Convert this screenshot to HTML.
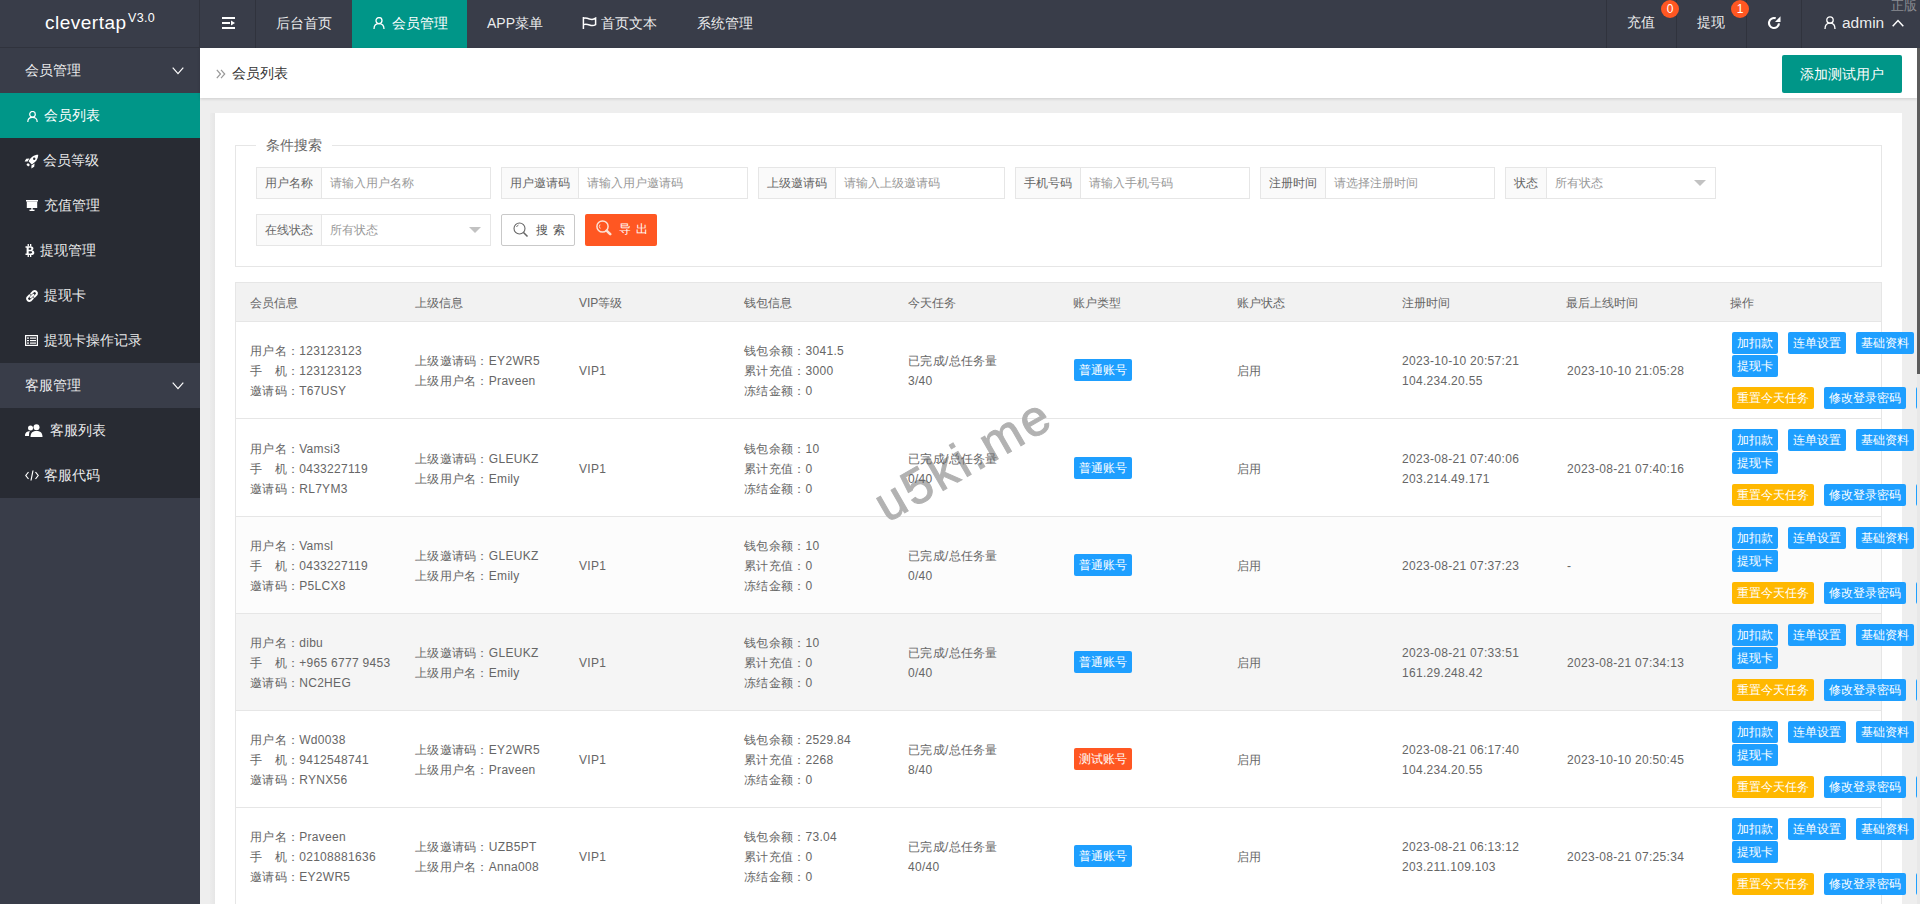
<!DOCTYPE html>
<html><head><meta charset="utf-8"><title>clevertap</title>
<style>
*{margin:0;padding:0;box-sizing:border-box}
html,body{width:1920px;height:904px;overflow:hidden}
body{position:relative;background:#eeeeee;font-family:"Liberation Sans",sans-serif;font-size:14px;color:#666}
.abs{position:absolute}
.hdr{position:absolute;left:0;top:0;width:1920px;height:48px;background:#393D49}
.logo{position:absolute;left:0;top:0;width:200px;height:48px;border-bottom:1px solid #30333d}
.logo .t{position:absolute;left:45px;top:11px;font-size:19px;letter-spacing:0.5px;color:#fff;line-height:24px}
.logo .v{position:absolute;left:128px;top:11px;font-size:12.5px;letter-spacing:0.3px;color:#fff;line-height:14px}
.nav{position:absolute;top:0;height:48px;line-height:46px;color:rgba(255,255,255,.92);font-size:14px;white-space:nowrap}
.sep{position:absolute;top:0;width:1px;height:48px;background:#30333d}
.badge{position:absolute;top:0;z-index:2;width:18px;height:18px;border-radius:9px;background:#FF5722;color:#fff;font-size:12px;line-height:18px;text-align:center}
.side{position:absolute;left:0;top:48px;width:200px;height:856px;background:#393D49}
.grp{position:absolute;left:0;width:200px;height:45px;line-height:45px;color:rgba(255,255,255,.92);padding-left:25px;font-size:14px;background:#393D49}
.itm{position:absolute;left:0;width:200px;height:45px;line-height:45px;color:rgba(255,255,255,.92);font-size:14px;background:#282B33}
.itm.on{background:#009688;color:#fff}
.itm .ic{position:absolute;top:0;height:45px}
.itm .tx{position:absolute;top:0}
.bc{position:absolute;left:200px;top:48px;width:1717px;height:50px;background:#fff;box-shadow:0 1px 3px rgba(0,0,0,.14)}
.card{position:absolute;left:215px;top:113px;width:1687px;height:800px;background:#fff}
.fs{position:absolute;left:235px;top:145px;width:1647px;height:122px;border:1px solid #e6e6e6}
.lg{position:absolute;left:256px;top:136px;padding:0 10px;background:#fff;font-size:14px;line-height:18px;color:#666}
.ig{position:absolute;height:32px;border:1px solid #e6e6e6;background:#fff;font-size:12px;line-height:30px;white-space:nowrap}
.ig .lb{position:absolute;left:0;top:0;height:30px;padding:0 0 0 8px;overflow:hidden;background:#FAFAFA;border-right:1px solid #e6e6e6;color:#666}
.ig .ph{position:absolute;top:0;color:#999}
.tri{position:absolute;top:12px;width:0;height:0;border-left:6px solid transparent;border-right:6px solid transparent;border-top:6px solid #c2c2c2}
.tbl{position:absolute;left:235px;top:282px;width:1647px;height:640px;border-left:1px solid #e6e6e6;border-right:1px solid #e6e6e6}
.th{position:absolute;left:235px;top:282px;width:1647px;height:40px;background:#f2f2f2;border:1px solid #e6e6e6;border-bottom-color:#e6e6e6}
.th>span{position:absolute;top:1px;line-height:38px;font-size:12px;color:#666}
.row{position:absolute;left:236px;width:1645px;border-bottom:1px solid #e6e6e6;background:#fff}
.c{position:absolute;z-index:6;font-size:12px;line-height:20px;color:#666;white-space:nowrap;margin-top:1px;letter-spacing:0.3px}
.btn{position:absolute;height:22px;line-height:22px;padding:0;text-align:center;font-size:12px;color:#fff;background:#1E9FFF;border-radius:2px;white-space:nowrap}
.btn.w{background:#FFB800}
.btn.d{background:#FF5722}
.sb{position:absolute;left:1917px;top:48px;width:3px;height:856px;background:#e8e8e8}
.sbt{position:absolute;left:1917px;top:48px;width:3px;height:326px;background:#5c5c5c}
.wm{position:absolute;left:891px;top:480px;font-size:50px;font-weight:normal;-webkit-text-stroke:1px rgb(178,178,178);color:rgb(178,178,178);transform:rotate(-30deg);transform-origin:left bottom;line-height:50px;letter-spacing:3px;z-index:5}
</style></head>
<body>
<!-- HEADER -->
<div class="hdr">
  <div class="logo"><span class="t">clevertap</span><span class="v">V3.0</span></div>
  <svg class="abs" style="left:222px;top:17px" width="13" height="12" viewBox="0 0 13 12"><rect x="0" y="0" width="13" height="2" fill="#fff"/><rect x="0" y="5" width="8" height="2" fill="#fff"/><rect x="0" y="10" width="13" height="2" fill="#fff"/><path d="M9 3.5 L13 6 L9 8.5Z" fill="#fff"/></svg>
  <div class="sep" style="left:199px"></div><div class="sep" style="left:255px"></div>
  <div class="nav" style="left:276px">后台首页</div>
  <div class="abs" style="left:352px;top:0;width:115px;height:48px;background:#009688"></div>
  <svg class="abs" style="left:373px;top:17px" width="12" height="12" viewBox="0 0 12 12"><circle cx="6" cy="3.6" r="3" fill="none" stroke="#fff" stroke-width="1.3"/><path d="M1 12 C1 8 3 6.6 6 6.6 C9 6.6 11 8 11 12" fill="none" stroke="#fff" stroke-width="1.3"/></svg>
  <div class="nav" style="left:392px;color:#fff">会员管理</div>
  <div class="nav" style="left:487px">APP菜单</div>
  <svg class="abs" style="left:582px;top:17px" width="15" height="12" viewBox="0 0 15 12"><path d="M1.4 0 V12" stroke="#fff" stroke-width="1.5"/><path d="M1.4 1.2 Q4 0.6 7.5 2 Q11 3.2 13.6 1.2 V7.6 Q11 9.4 7.5 8 Q4 6.6 1.4 7.6" fill="none" stroke="#fff" stroke-width="1.5"/></svg>
  <div class="nav" style="left:601px">首页文本</div>
  <div class="nav" style="left:697px">系统管理</div>

  <div class="sep" style="left:1606px"></div>
  <div class="nav" style="left:1627px;line-height:44px">充值</div>
  <div class="badge" style="left:1661px">0</div>
  <div class="sep" style="left:1676px"></div>
  <div class="nav" style="left:1697px;line-height:44px">提现</div>
  <div class="badge" style="left:1731px">1</div>
  <div class="sep" style="left:1746px"></div>
  <svg class="abs" style="left:1767px;top:16px" width="15" height="14" viewBox="0 0 15 14"><path d="M8.7 2.3 A5 5 0 1 0 11.98 7.44" fill="none" stroke="#fff" stroke-width="2.1"/><path d="M8 6 L13.5 0.3 L13.5 6Z" fill="#fff"/></svg>
  <div class="sep" style="left:1801px"></div>
  <svg class="abs" style="left:1824px;top:16px" width="12" height="13" viewBox="0 0 12 13"><circle cx="6" cy="4" r="3.2" fill="none" stroke="#fff" stroke-width="1.3"/><path d="M1 13 C1 8.8 3 7.2 6 7.2 C9 7.2 11 8.8 11 13" fill="none" stroke="#fff" stroke-width="1.3"/></svg>
  <div class="nav" style="left:1842px;font-size:15.5px;line-height:45px">admin</div>
  <svg class="abs" style="left:1892px;top:19px" width="12" height="8" viewBox="0 0 12 8"><path d="M0.7 7.3 L6 1.5 L11.3 7.3" fill="none" stroke="#fff" stroke-width="1.5"/></svg>
  <div class="abs" style="left:1891px;top:-2px;font-size:13px;line-height:15px;color:#8a8c92">正版</div>
</div>

<!-- SIDEBAR -->
<div class="side">
  <div class="grp" style="top:0">会员管理<svg class="abs" style="left:172px;top:19px" width="12" height="8" viewBox="0 0 12 8"><path d="M0.7 0.7 L6 6.6 L11.3 0.7" fill="none" stroke="#fff" stroke-width="1.2"/></svg></div>
  <div class="itm on" style="top:45px"><svg class="abs" style="left:27px;top:18px" width="11" height="11" viewBox="0 0 11 11"><circle cx="5.5" cy="3.3" r="2.8" fill="none" stroke="#fff" stroke-width="1.2"/><path d="M0.8 11 C0.8 7.6 2.8 6.3 5.5 6.3 C8.2 6.3 10.2 7.6 10.2 11" fill="none" stroke="#fff" stroke-width="1.2"/></svg><span class="tx" style="left:44px">会员列表</span></div>
  <div class="itm" style="top:90px"><svg class="abs" style="left:24px;top:16px" width="15" height="15" viewBox="0 0 15 15"><path d="M14.2 0.8 C10 0.8 6.6 3.4 4.6 7.2 L7.8 10.4 C11.6 8.4 14.2 5 14.2 0.8Z" fill="#fff"/><path d="M5.4 4.4 L2.2 4.8 L0.6 7.6 L3.6 7.6Z M10.6 9.6 L10.2 12.8 L7.4 14.4 L7.4 11.4Z" fill="#fff"/><path d="M4 9 L6 11 L4.2 12.6 L2.4 10.8Z" fill="#fff"/><circle cx="10.2" cy="4.8" r="1.2" fill="#282B33"/></svg><span class="tx" style="left:43px">会员等级</span></div>
  <div class="itm" style="top:135px"><svg class="abs" style="left:26px;top:17px" width="12" height="11" viewBox="0 0 12 11"><rect x="0" y="0" width="12" height="1.5" fill="#fff"/><rect x="0.8" y="1.5" width="10.4" height="6.5" fill="#fff"/><rect x="5.3" y="8" width="1.4" height="2" fill="#fff"/><rect x="3.5" y="9.6" width="5" height="1.4" fill="#fff"/></svg><span class="tx" style="left:44px">充值管理</span></div>
  <div class="itm" style="top:180px"><svg class="abs" style="left:25px;top:16px" width="10" height="13" viewBox="0 0 10 13"><path d="M0.5 2.2 H5.6 C7.6 2.2 8.4 3.2 8.4 4.4 C8.4 5.4 7.8 6 7 6.3 C8.3 6.6 9.3 7.4 9.3 8.7 C9.3 10.1 8.2 11 6.2 11 H0.5 V9.5 H1.6 V3.7 H0.5Z M3.7 3.8 V5.7 H5.2 C5.9 5.7 6.3 5.3 6.3 4.75 C6.3 4.2 5.9 3.8 5.2 3.8Z M3.7 7.2 V9.4 H5.6 C6.6 9.4 7.1 9 7.1 8.3 C7.1 7.6 6.6 7.2 5.6 7.2Z" fill="#fff" fill-rule="evenodd"/><rect x="2.6" y="0" width="1.3" height="2.5" fill="#fff"/><rect x="5" y="0" width="1.3" height="2.5" fill="#fff"/><rect x="2.6" y="10.6" width="1.3" height="2.4" fill="#fff"/><rect x="5" y="10.6" width="1.3" height="2.4" fill="#fff"/></svg><span class="tx" style="left:40px">提现管理</span></div>
  <div class="itm" style="top:225px"><svg class="abs" style="left:25px;top:16px" width="14" height="14" viewBox="0 0 14 14"><path d="M5.6 8.4 L8.4 5.6" stroke="#fff" stroke-width="1.8" stroke-linecap="round"/><path d="M4.6 6.2 L2.3 8.5 A2.4 2.4 0 0 0 5.5 11.7 L7.8 9.4" fill="none" stroke="#fff" stroke-width="2" stroke-linecap="round"/><path d="M9.4 7.8 L11.7 5.5 A2.4 2.4 0 0 0 8.5 2.3 L6.2 4.6" fill="none" stroke="#fff" stroke-width="2" stroke-linecap="round"/></svg><span class="tx" style="left:44px">提现卡</span></div>
  <div class="itm" style="top:270px"><svg class="abs" style="left:25px;top:17px" width="13" height="11" viewBox="0 0 13 11"><rect x="0.6" y="0.6" width="11.8" height="9.8" fill="none" stroke="#fff" stroke-width="1.2"/><rect x="2" y="2.5" width="2" height="1.2" fill="#fff"/><rect x="5" y="2.5" width="6" height="1.2" fill="#fff"/><rect x="2" y="5" width="2" height="1.2" fill="#fff"/><rect x="5" y="5" width="6" height="1.2" fill="#fff"/><rect x="2" y="7.5" width="2" height="1.2" fill="#fff"/><rect x="5" y="7.5" width="6" height="1.2" fill="#fff"/></svg><span class="tx" style="left:44px">提现卡操作记录</span></div>
  <div class="grp" style="top:315px">客服管理<svg class="abs" style="left:172px;top:19px" width="12" height="8" viewBox="0 0 12 8"><path d="M0.7 0.7 L6 6.6 L11.3 0.7" fill="none" stroke="#fff" stroke-width="1.2"/></svg></div>
  <div class="itm" style="top:360px"><svg class="abs" style="left:25px;top:16px" width="18" height="13" viewBox="0 0 18 13"><circle cx="11.5" cy="3.3" r="3" fill="#fff"/><path d="M5.5 13 C5.5 8.5 8 7 11.5 7 C15 7 17.5 8.5 17.5 13Z" fill="#fff"/><circle cx="5.5" cy="4" r="2.5" fill="#fff"/><path d="M0 12 C0 8.5 2 7.3 5 7.3 C4 8.5 4 10 4 12Z" fill="#fff"/></svg><span class="tx" style="left:50px">客服列表</span></div>
  <div class="itm" style="top:405px"><svg class="abs" style="left:25px;top:17px" width="14" height="11" viewBox="0 0 14 11"><path d="M3.5 2 L0.8 5.5 L3.5 9 M10.5 2 L13.2 5.5 L10.5 9 M8 0.5 L6 10.5" fill="none" stroke="#fff" stroke-width="1.2"/></svg><span class="tx" style="left:44px">客服代码</span></div>
</div>

<!-- BREADCRUMB -->
<div class="bc">
  <svg class="abs" style="left:16px;top:21px" width="10" height="10" viewBox="0 0 10 10"><path d="M0.8 0.8 L4.5 5 L0.8 9.2 M5 0.8 L8.7 5 L5 9.2" fill="none" stroke="#999" stroke-width="1.2"/></svg>
  <div class="abs" style="left:32px;top:0;line-height:50px;color:#333;font-size:14px">会员列表</div>
  <div class="abs" style="left:1582px;top:7px;width:120px;height:38px;line-height:38px;background:#009688;color:#fff;text-align:center;border-radius:2px;font-size:14px">添加测试用户</div>
</div>

<!-- CARD -->
<div class="abs" style="left:210px;top:113px;width:5px;height:800px;background:linear-gradient(to right,#ececec,#e6e6e6)"></div><div class="card"></div>
<div class="fs"></div>
<div class="lg">条件搜索</div>

<div class="ig" style="left:256px;top:167px;width:235px"><span class="lb" style="width:65px">用户名称</span><span class="ph" style="left:73px">请输入用户名称</span></div>
<div class="ig" style="left:501px;top:167px;width:247px"><span class="lb" style="width:77px">用户邀请码</span><span class="ph" style="left:85px">请输入用户邀请码</span></div>
<div class="ig" style="left:758px;top:167px;width:247px"><span class="lb" style="width:77px">上级邀请码</span><span class="ph" style="left:85px">请输入上级邀请码</span></div>
<div class="ig" style="left:1015px;top:167px;width:235px"><span class="lb" style="width:65px">手机号码</span><span class="ph" style="left:73px">请输入手机号码</span></div>
<div class="ig" style="left:1260px;top:167px;width:235px"><span class="lb" style="width:65px">注册时间</span><span class="ph" style="left:73px">请选择注册时间</span></div>
<div class="ig" style="left:1505px;top:167px;width:211px"><span class="lb" style="width:41px">状态</span><span class="ph" style="left:49px">所有状态</span><span class="tri" style="left:188px"></span></div>
<div class="ig" style="left:256px;top:214px;width:235px"><span class="lb" style="width:65px">在线状态</span><span class="ph" style="left:73px">所有状态</span><span class="tri" style="left:212px"></span></div>

<div class="abs" style="left:501px;top:214px;width:74px;height:32px;border:1px solid #C9C9C9;background:#fff;border-radius:2px;font-size:12px;line-height:30px;color:#555">
  <svg class="abs" style="left:11px;top:7px" width="16" height="16" viewBox="0 0 16 16"><circle cx="6.5" cy="6.5" r="5.5" fill="none" stroke="#666" stroke-width="1.1"/><path d="M10.5 10.5 L14.5 14.5" stroke="#666" stroke-width="1.6"/><path d="M3.5 5 A3.5 3.5 0 0 1 5.5 3" fill="none" stroke="#666" stroke-width="0.9"/></svg>
  <span class="abs" style="left:34px;top:0">搜</span><span class="abs" style="left:51px;top:0">索</span>
</div>
<div class="abs" style="left:585px;top:214px;width:72px;height:32px;background:#FF5722;border-radius:2px;font-size:12px;line-height:30px;color:#fff">
  <svg class="abs" style="left:11px;top:6px" width="16" height="16" viewBox="0 0 16 16"><circle cx="6.5" cy="6.5" r="5.6" fill="none" stroke="#fde0d2" stroke-width="1.5"/><path d="M4 4.5 A3.2 3.2 0 0 0 4.3 8.6" fill="none" stroke="#fde0d2" stroke-width="1"/><path d="M10.6 10.6 L14.2 14.2" stroke="#fde0d2" stroke-width="2.6" stroke-linecap="round"/></svg>
  <span class="abs" style="left:34px;top:0">导</span><span class="abs" style="left:51px;top:0">出</span>
</div>

<!-- TABLE -->
<div class="tbl"></div>
<div class="th">
  <span style="left:14px">会员信息</span><span style="left:179px">上级信息</span><span style="left:343px">VIP等级</span><span style="left:508px">钱包信息</span><span style="left:672px">今天任务</span><span style="left:837px">账户类型</span><span style="left:1001px">账户状态</span><span style="left:1166px">注册时间</span><span style="left:1330px">最后上线时间</span><span style="left:1494px">操作</span>
</div>
<div id="rows"><div class="row" style="top:322px;height:97px;background:#fff"></div>
<div class="c" style="left:250px;top:340.0px">用户名：123123123<br>手　机：123123123<br>邀请码：T67USY</div>
<div class="c" style="left:415px;top:350.0px">上级邀请码：EY2WR5<br>上级用户名：Praveen</div>
<div class="c" style="left:579px;top:360.0px">VIP1</div>
<div class="c" style="left:744px;top:340.0px">钱包余额：3041.5<br>累计充值：3000<br>冻结金额：0</div>
<div class="c" style="left:908px;top:350.0px">已完成/总任务量<br>3/40</div>
<div class="btn" style="left:1074px;top:359.0px;width:58px">普通账号</div>
<div class="c" style="left:1237px;top:360.0px">启用</div>
<div class="c" style="left:1402px;top:350.0px">2023-10-10 20:57:21<br>104.234.20.55</div>
<div class="c" style="left:1567px;top:360.0px">2023-10-10 21:05:28</div>
<div class="btn" style="left:1732px;top:332px;width:46px">加扣款</div>
<div class="btn" style="left:1788px;top:332px;width:58px">连单设置</div>
<div class="btn" style="left:1856px;top:332px;width:58px">基础资料</div>
<div class="btn" style="left:1732px;top:355px;width:46px">提现卡</div>
<div class="btn w" style="left:1732px;top:387px;width:82px">重置今天任务</div>
<div class="btn" style="left:1824px;top:387px;width:82px">修改登录密码</div>
<div class="btn" style="left:1916px;top:387px;width:34px">删除</div>
<div class="row" style="top:419px;height:98px;background:#fff"></div>
<div class="c" style="left:250px;top:437.5px">用户名：Vamsi3<br>手　机：0433227119<br>邀请码：RL7YM3</div>
<div class="c" style="left:415px;top:447.5px">上级邀请码：GLEUKZ<br>上级用户名：Emily</div>
<div class="c" style="left:579px;top:457.5px">VIP1</div>
<div class="c" style="left:744px;top:437.5px">钱包余额：10<br>累计充值：0<br>冻结金额：0</div>
<div class="c" style="left:908px;top:447.5px">已完成/总任务量<br>0/40</div>
<div class="btn" style="left:1074px;top:456.5px;width:58px">普通账号</div>
<div class="c" style="left:1237px;top:457.5px">启用</div>
<div class="c" style="left:1402px;top:447.5px">2023-08-21 07:40:06<br>203.214.49.171</div>
<div class="c" style="left:1567px;top:457.5px">2023-08-21 07:40:16</div>
<div class="btn" style="left:1732px;top:429px;width:46px">加扣款</div>
<div class="btn" style="left:1788px;top:429px;width:58px">连单设置</div>
<div class="btn" style="left:1856px;top:429px;width:58px">基础资料</div>
<div class="btn" style="left:1732px;top:452px;width:46px">提现卡</div>
<div class="btn w" style="left:1732px;top:484px;width:82px">重置今天任务</div>
<div class="btn" style="left:1824px;top:484px;width:82px">修改登录密码</div>
<div class="btn" style="left:1916px;top:484px;width:34px">删除</div>
<div class="row" style="top:517px;height:97px;background:#fcfcfc"></div>
<div class="c" style="left:250px;top:535.0px">用户名：Vamsl<br>手　机：0433227119<br>邀请码：P5LCX8</div>
<div class="c" style="left:415px;top:545.0px">上级邀请码：GLEUKZ<br>上级用户名：Emily</div>
<div class="c" style="left:579px;top:555.0px">VIP1</div>
<div class="c" style="left:744px;top:535.0px">钱包余额：10<br>累计充值：0<br>冻结金额：0</div>
<div class="c" style="left:908px;top:545.0px">已完成/总任务量<br>0/40</div>
<div class="btn" style="left:1074px;top:554.0px;width:58px">普通账号</div>
<div class="c" style="left:1237px;top:555.0px">启用</div>
<div class="c" style="left:1402px;top:555.0px">2023-08-21 07:37:23</div>
<div class="c" style="left:1567px;top:555.0px">-</div>
<div class="btn" style="left:1732px;top:527px;width:46px">加扣款</div>
<div class="btn" style="left:1788px;top:527px;width:58px">连单设置</div>
<div class="btn" style="left:1856px;top:527px;width:58px">基础资料</div>
<div class="btn" style="left:1732px;top:550px;width:46px">提现卡</div>
<div class="btn w" style="left:1732px;top:582px;width:82px">重置今天任务</div>
<div class="btn" style="left:1824px;top:582px;width:82px">修改登录密码</div>
<div class="btn" style="left:1916px;top:582px;width:34px">删除</div>
<div class="row" style="top:614px;height:97px;background:#f5f5f5"></div>
<div class="c" style="left:250px;top:632.0px">用户名：dibu<br>手　机：+965 6777 9453<br>邀请码：NC2HEG</div>
<div class="c" style="left:415px;top:642.0px">上级邀请码：GLEUKZ<br>上级用户名：Emily</div>
<div class="c" style="left:579px;top:652.0px">VIP1</div>
<div class="c" style="left:744px;top:632.0px">钱包余额：10<br>累计充值：0<br>冻结金额：0</div>
<div class="c" style="left:908px;top:642.0px">已完成/总任务量<br>0/40</div>
<div class="btn" style="left:1074px;top:651.0px;width:58px">普通账号</div>
<div class="c" style="left:1237px;top:652.0px">启用</div>
<div class="c" style="left:1402px;top:642.0px">2023-08-21 07:33:51<br>161.29.248.42</div>
<div class="c" style="left:1567px;top:652.0px">2023-08-21 07:34:13</div>
<div class="btn" style="left:1732px;top:624px;width:46px">加扣款</div>
<div class="btn" style="left:1788px;top:624px;width:58px">连单设置</div>
<div class="btn" style="left:1856px;top:624px;width:58px">基础资料</div>
<div class="btn" style="left:1732px;top:647px;width:46px">提现卡</div>
<div class="btn w" style="left:1732px;top:679px;width:82px">重置今天任务</div>
<div class="btn" style="left:1824px;top:679px;width:82px">修改登录密码</div>
<div class="btn" style="left:1916px;top:679px;width:34px">删除</div>
<div class="row" style="top:711px;height:97px;background:#fff"></div>
<div class="c" style="left:250px;top:729.0px">用户名：Wd0038<br>手　机：9412548741<br>邀请码：RYNX56</div>
<div class="c" style="left:415px;top:739.0px">上级邀请码：EY2WR5<br>上级用户名：Praveen</div>
<div class="c" style="left:579px;top:749.0px">VIP1</div>
<div class="c" style="left:744px;top:729.0px">钱包余额：2529.84<br>累计充值：2268<br>冻结金额：0</div>
<div class="c" style="left:908px;top:739.0px">已完成/总任务量<br>8/40</div>
<div class="btn d" style="left:1074px;top:748.0px;width:58px">测试账号</div>
<div class="c" style="left:1237px;top:749.0px">启用</div>
<div class="c" style="left:1402px;top:739.0px">2023-08-21 06:17:40<br>104.234.20.55</div>
<div class="c" style="left:1567px;top:749.0px">2023-10-10 20:50:45</div>
<div class="btn" style="left:1732px;top:721px;width:46px">加扣款</div>
<div class="btn" style="left:1788px;top:721px;width:58px">连单设置</div>
<div class="btn" style="left:1856px;top:721px;width:58px">基础资料</div>
<div class="btn" style="left:1732px;top:744px;width:46px">提现卡</div>
<div class="btn w" style="left:1732px;top:776px;width:82px">重置今天任务</div>
<div class="btn" style="left:1824px;top:776px;width:82px">修改登录密码</div>
<div class="btn" style="left:1916px;top:776px;width:34px">删除</div>
<div class="row" style="top:808px;height:97px;background:#fff"></div>
<div class="c" style="left:250px;top:826.0px">用户名：Praveen<br>手　机：02108881636<br>邀请码：EY2WR5</div>
<div class="c" style="left:415px;top:836.0px">上级邀请码：UZB5PT<br>上级用户名：Anna008</div>
<div class="c" style="left:579px;top:846.0px">VIP1</div>
<div class="c" style="left:744px;top:826.0px">钱包余额：73.04<br>累计充值：0<br>冻结金额：0</div>
<div class="c" style="left:908px;top:836.0px">已完成/总任务量<br>40/40</div>
<div class="btn" style="left:1074px;top:845.0px;width:58px">普通账号</div>
<div class="c" style="left:1237px;top:846.0px">启用</div>
<div class="c" style="left:1402px;top:836.0px">2023-08-21 06:13:12<br>203.211.109.103</div>
<div class="c" style="left:1567px;top:846.0px">2023-08-21 07:25:34</div>
<div class="btn" style="left:1732px;top:818px;width:46px">加扣款</div>
<div class="btn" style="left:1788px;top:818px;width:58px">连单设置</div>
<div class="btn" style="left:1856px;top:818px;width:58px">基础资料</div>
<div class="btn" style="left:1732px;top:841px;width:46px">提现卡</div>
<div class="btn w" style="left:1732px;top:873px;width:82px">重置今天任务</div>
<div class="btn" style="left:1824px;top:873px;width:82px">修改登录密码</div>
<div class="btn" style="left:1916px;top:873px;width:34px">删除</div></div><!--/rows-->

<div class="sb"></div><div class="sbt"></div>
<div class="wm">u5ki.me</div>
<script>
(function(){
  var p=document.createElement('span');
  p.style.cssText='position:absolute;left:0;top:0;visibility:hidden;font-size:100px;line-height:100px;white-space:nowrap;letter-spacing:0';
  p.textContent='\u4f1a\u5458\u7ba1\u7406';
  document.body.appendChild(p);
  var w=p.getBoundingClientRect().width;
  document.body.removeChild(p);
  if(!(w>0) || w>=396) return;
  var r=w/400, k=1.25, ex=(1-r*k)/k;
  var wk=document.createTreeWalker(document.body,NodeFilter.SHOW_TEXT,null,false),ns=[],n;
  while((n=wk.nextNode())) ns.push(n);
  var re=/[\u2E80-\u9FFF\uF900-\uFAFF\uFE30-\uFE4F\uFF00-\uFFEF]+/g;
  for(var i=0;i<ns.length;i++){
    n=ns[i]; if(!n.parentNode||n.parentNode.nodeName==='SCRIPT'||n.parentNode.nodeName==='STYLE') continue; var t=n.nodeValue; re.lastIndex=0;
    if(!re.test(t)) continue; re.lastIndex=0;
    var f=document.createDocumentFragment(),last=0,m;
    while((m=re.exec(t))){
      if(m.index>last) f.appendChild(document.createTextNode(t.slice(last,m.index)));
      var sp=document.createElement('span'); sp.style.cssText='position:relative;top:1.5px;font-size:'+k+'em;line-height:0;letter-spacing:'+ex+'em;-webkit-text-stroke:0.5px currentColor'; sp.textContent=m[0]; f.appendChild(sp);
      last=m.index+m[0].length;
    }
    if(last<t.length) f.appendChild(document.createTextNode(t.slice(last)));
    n.parentNode.replaceChild(f,n);
  }
})();
</script>
</body></html>
